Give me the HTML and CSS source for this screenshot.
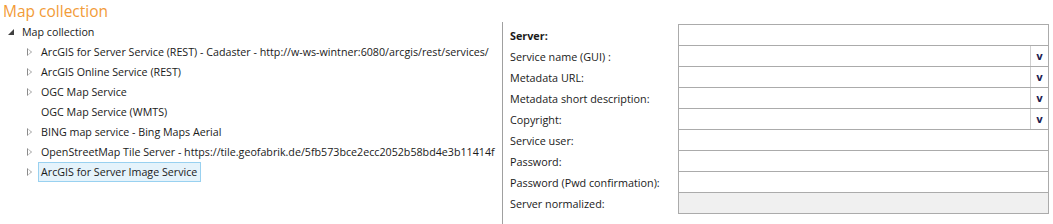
FILE: index.html
```html
<!DOCTYPE html>
<html>
<head>
<meta charset="utf-8">
<link rel="stylesheet" href="styles.css">
</head>
<body>
<div class="title">Map collection</div>
<div class="main">
  <div class="tree">
    <div class="row root"><span class="exp-open"></span><span class="label">Map collection</span></div>
    <div class="row child"><span class="exp"></span><span class="label">ArcGIS for Server Service (REST) - Cadaster - http://w-ws-wintner:6080/arcgis/rest/services/</span></div>
    <div class="row child"><span class="exp"></span><span class="label">ArcGIS Online Service (REST)</span></div>
    <div class="row child"><span class="exp"></span><span class="label">OGC Map Service</span></div>
    <div class="row child"><span class="noexp"></span><span class="label">OGC Map Service (WMTS)</span></div>
    <div class="row child"><span class="exp"></span><span class="label">BING map service - Bing Maps Aerial</span></div>
    <div class="row child"><span class="exp"></span><span class="label">OpenStreetMap Tile Server - https://tile.geofabrik.de/5fb573bce2ecc2052b58bd4e3b11414f</span></div>
    <div class="row child"><span class="exp"></span><span class="label selected">ArcGIS for Server Image Service</span></div>
  </div>
  <div class="form">
    <div class="flabel bold">Server:</div><div class="field"></div>
    <div class="flabel">Service name (GUI) :</div><div class="field combo"><span class="btn">v</span></div>
    <div class="flabel">Metadata URL:</div><div class="field combo"><span class="btn">v</span></div>
    <div class="flabel">Metadata short description:</div><div class="field combo"><span class="btn">v</span></div>
    <div class="flabel">Copyright:</div><div class="field combo"><span class="btn">v</span></div>
    <div class="flabel">Service user:</div><div class="field"></div>
    <div class="flabel">Password:</div><div class="field"></div>
    <div class="flabel">Password (Pwd confirmation):</div><div class="field"></div>
    <div class="flabel">Server normalized:</div><div class="field last disabled"></div>
  </div>
</div>
</body>
</html>
```

FILE: styles.css
```css
* { box-sizing: border-box; }
html, body { margin: 0; padding: 0; background: #fff; }
body {
  width: 1053px;
  height: 224px;
  overflow: hidden;
  font-family: "Open Sans", "Noto Sans", sans-serif;
  font-size: 10.7px;
  color: #1a1a1a;
}
.title {
  height: 22px;
  padding-left: 3px;
  font-size: 15.5px;
  line-height: 22px;
  color: #f29b38;
}
.main {
  display: flex;
  height: 202px;
}
.tree {
  width: 503px;
  flex-shrink: 0;
  border-right: 1px solid #a0a0a0;
  overflow: hidden;
}
.row {
  height: 20px;
  display: flex;
  align-items: center;
}
.root { padding-left: 8px; }
.root .label { margin-left: 3px; }
.child { padding-left: 27px; }
.label {
  flex-shrink: 0;
  height: 20px;
  line-height: 18px;
  padding: 0 3px 0 2px;
  border: 1px solid transparent;
  white-space: nowrap;
}
.exp-open {
  flex-shrink: 0;
  width: 0; height: 0;
  border-left: 6px solid transparent;
  border-bottom: 6px solid #404040;
  margin-right: 2px;
}
.exp, .noexp {
  flex-shrink: 0;
  width: 6px; height: 9px;
  margin-right: 5px;
  position: relative;
}
.exp::before {
  content: "";
  position: absolute;
  left: 0; top: 0;
  width: 0; height: 0;
  border-top: 4.5px solid transparent;
  border-bottom: 4.5px solid transparent;
  border-left: 5.5px solid #8a8a8a;
}
.exp::after {
  content: "";
  position: absolute;
  left: 1px; top: 1.5px;
  width: 0; height: 0;
  border-top: 3px solid transparent;
  border-bottom: 3px solid transparent;
  border-left: 3.6px solid #fff;
}
.selected {
  background: #e5f3fb;
  border-color: #99d1f0;
}
.form {
  margin-top: 2px;
  padding-left: 7px;
  display: grid;
  grid-template-columns: 168px 371px;
  grid-auto-rows: 21px;
  align-content: start;
}
.flabel {
  display: flex;
  align-items: center;
  padding-top: 2px;
  white-space: nowrap;
  font-size: 10.8px;
}
.bold { font-weight: bold; }
.field {
  border: 1px solid #ababab;
  border-bottom: none;
  display: flex;
  justify-content: flex-end;
}
.field.last { border-bottom: 1px solid #ababab; height: 22px; }
.disabled { background: #f0f0f0; }
.btn {
  width: 18px;
  border-left: 1px solid #d0d0d0;
  display: flex;
  align-items: center;
  justify-content: center;
  font-family: "DejaVu Sans", sans-serif;
  font-weight: bold;
  font-size: 10px;
  color: #1c1c50;
}
```
